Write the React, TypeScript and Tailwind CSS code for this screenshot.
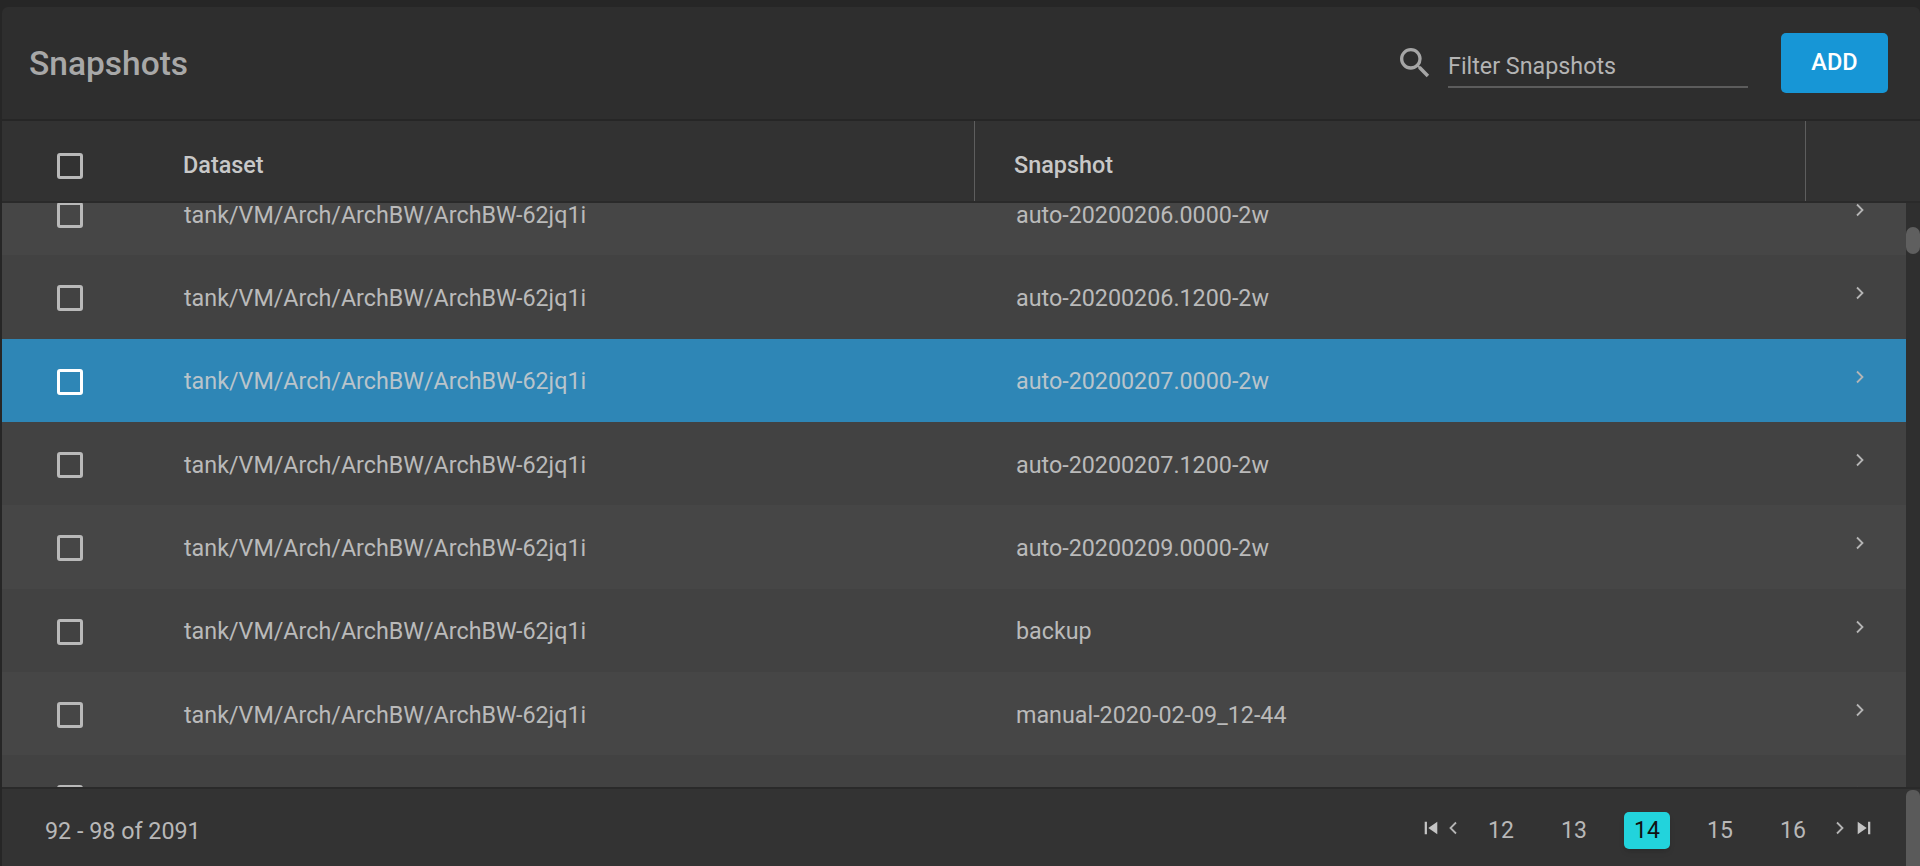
const rows = [
  'auto-20200206.0000-2w',
  'auto-20200206.1200-2w',
  'auto-20200207.0000-2w',
  'auto-20200207.1200-2w',
  'auto-20200209.0000-2w',
  'backup',
  'manual-2020-02-09_12-44',
  '',
]

function Checkbox({ selected }: { selected?: boolean }) {
  return (
    <div
      className={
        selected
          ? 'h-[26px] w-[26px] rounded-[3px] border-[3px] border-white'
          : 'h-[26px] w-[26px] rounded-[3px] border-[3px] border-[#b9b9b9]'
      }
    />
  )
}

function Chevron({ left }: { left?: boolean }) {
  return (
    <svg width="10" height="14" viewBox="0 0 10 14" fill="none" stroke="#b5b5b5" strokeWidth="1.8">
      <path d={left ? 'M8 1.5 2.5 7 8 12.5' : 'M2 1.5 7.5 7 2 12.5'} />
    </svg>
  )
}

function PageButton({ label, active }: { label: string; active?: boolean }) {
  return (
    <div
      className={
        active
          ? 'flex h-[37px] w-[46px] items-center justify-center rounded-[5px] bg-[#22d3dc] pt-[2px] text-[#111] shadow-md'
          : 'flex h-[37px] w-[46px] items-center justify-center pt-[3px] text-[#b8b8b8]'
      }
    >
      {label}
    </div>
  )
}

export default function App() {
  return (
    <div className="relative flex h-[866px] w-[1920px] flex-col overflow-hidden bg-[#262626] pl-[2px] pt-[7px] font-['Roboto',sans-serif]">
      <div className="flex h-[114px] shrink-0 items-center rounded-t-[6px] border-b-2 border-[#262626] bg-[#2e2e2e] pl-[27px] pr-[32px]">
        <div className="pt-[3px] text-[33.5px] font-medium text-[#a8a8a8]">Snapshots</div>
        <div className="ml-auto flex items-center">
          <svg width="40" height="40" viewBox="0 0 24 24" fill="#a6a6a6" className="mr-[4px]">
            <path d="M15.5 14h-.79l-.28-.27A6.47 6.47 0 0 0 16 9.5 6.5 6.5 0 1 0 9.5 16c1.61 0 3.09-.59 4.23-1.57l.27.28v.79l5 4.99L20.49 19l-4.99-5zm-6 0C7.01 14 5 11.99 5 9.5S7.01 5 9.5 5 14 7.01 14 9.5 11.99 14 9.5 14z" />
          </svg>
          <div className="ml-[9px] mt-[6px] flex h-[44px] w-[300px] items-center border-b-2 border-[#5c5c5c] pt-[2px] text-[23.3px] text-[#b4b4b4]">
            Filter Snapshots
          </div>
          <div className="ml-[33px] flex h-[60px] w-[107px] items-center justify-center rounded-[5px] bg-[#1796d6] text-[23.5px] font-medium text-white">
            ADD
          </div>
        </div>
      </div>

      <div className="flex h-[82px] shrink-0 items-stretch border-b-2 border-[#2a2a2a] bg-[#323232] text-[23.4px] font-medium text-[#c8c8c8]">
        <div className="flex w-[181px] shrink-0 items-center pl-[55px] pt-[10px]">
          <Checkbox />
        </div>
        <div className="flex w-[791px] shrink-0 items-center pt-[10px]">Dataset</div>
        <div className="flex w-[832px] shrink-0 items-center border-x border-[#5e5e5e] pl-[39px] pt-[10px]">Snapshot</div>
      </div>

      <div className="relative h-[584px] shrink-0 overflow-hidden bg-[#2f2f2f] pr-[14px]">
        <div className="mt-[-31px]">
          {rows.map((snapshot, i) => {
            const selected = i === 2
            return (
              <div
                key={i}
                className={
                  selected
                    ? 'flex h-[83.33px] items-center bg-[#2e86b6] pt-[3px] text-[23.3px] text-[#b9c4cb]'
                    : i % 2 === 0
                      ? 'flex h-[83.33px] items-center bg-[#464646] pt-[3px] text-[23.3px] text-[#bababa]'
                      : 'flex h-[83.33px] items-center bg-[#424242] pt-[3px] text-[23.3px] text-[#bababa]'
                }
              >
                <div className="w-[182px] shrink-0 pl-[55px]">
                  <Checkbox selected={selected} />
                </div>
                <div className="w-[832px] shrink-0">{snapshot && 'tank/VM/Arch/ArchBW/ArchBW-62jq1i'}</div>
                <div>{snapshot}</div>
                <div className="ml-auto mb-[10px] pr-[41px]">
                  <Chevron />
                </div>
              </div>
            )
          })}
        </div>
        <div className="absolute right-0 top-[24px] h-[27px] w-[14px] rounded-full bg-[#5f5f5f]" />
      </div>

      <div className="flex flex-1 items-center border-t-2 border-[#2a2a2a] bg-[#333333] pl-[43px] pr-[47px] pt-[5px]">
        <div className="mt-[2px] text-[23.3px] text-[#b8b8b8]">92 - 98 of 2091</div>
        <div className="ml-auto flex items-center text-[23px]">
          <svg width="18" height="18" viewBox="0 0 20 20" fill="#c4c4c4" className="mb-[4px]">
            <path d="M3 3h2.5v14H3zM17 3v14L7 10z" />
          </svg>
          <div className="mb-[4px] ml-[8px] mr-[20px]">
            <Chevron left />
          </div>
          <div className="flex gap-[27px]">
            <PageButton label="12" />
            <PageButton label="13" />
            <PageButton label="14" active />
            <PageButton label="15" />
            <PageButton label="16" />
          </div>
          <div className="mb-[4px] ml-[19px] mr-[10px]">
            <Chevron />
          </div>
          <svg width="18" height="18" viewBox="0 0 20 20" fill="#c4c4c4" className="mb-[4px]">
            <path d="M17 3h-2.5v14H17zM3 3v14l10-7z" />
          </svg>
        </div>
      </div>

      <div className="absolute bottom-0 right-0 h-[76px] w-[14px] rounded-t-[6px] bg-[#5a5a5a]" />
    </div>
  )
}
